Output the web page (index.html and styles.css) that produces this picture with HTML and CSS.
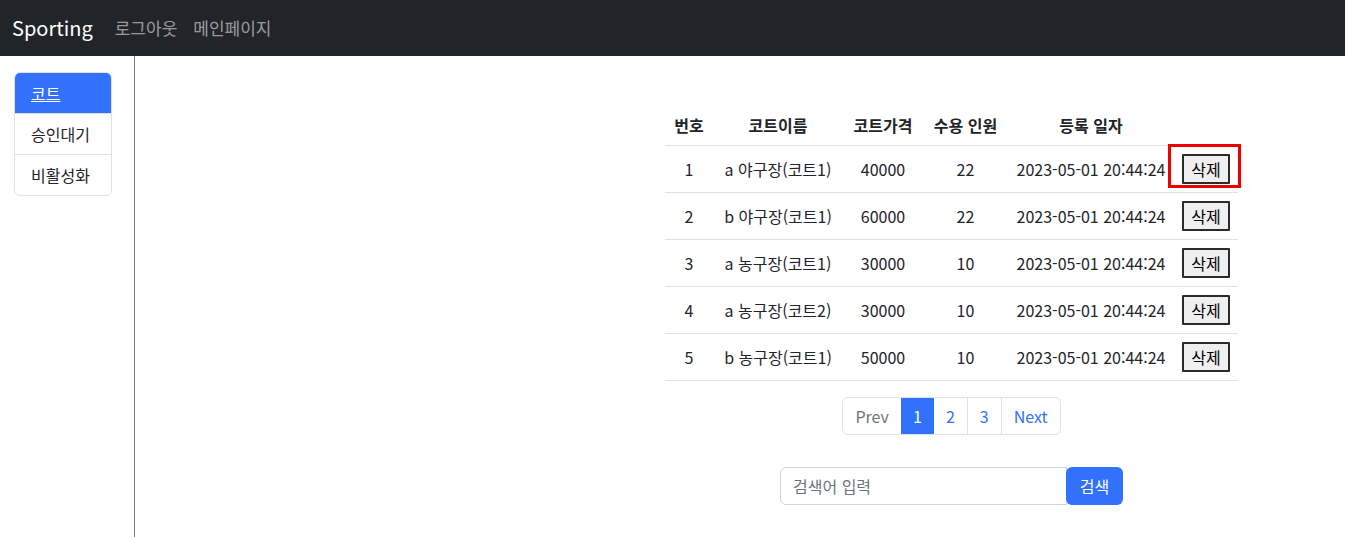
FILE: index.html
```html
<!DOCTYPE html>
<html lang="ko">
<head>
<meta charset="utf-8">
<title>Sporting</title>
<link rel="stylesheet" href="styles.css">
</head>
<body>
<nav class="navbar">
  <a class="brand" href="#">Sporting</a>
  <a class="nav-link" href="#">로그아웃</a>
  <a class="nav-link" href="#">메인페이지</a>
</nav>
<div class="layout">
  <aside class="sidebar">
    <div class="list-group">
      <a class="list-item active" href="#">코트</a>
      <a class="list-item" href="#">승인대기</a>
      <a class="list-item" href="#">비활성화</a>
    </div>
  </aside>
  <main class="main">
    <div class="content">
      <table class="table">
        <colgroup>
          <col class="c1"><col class="c2"><col class="c3"><col class="c4"><col class="c5"><col class="c6">
        </colgroup>
        <thead>
          <tr><th>번호</th><th>코트이름</th><th>코트가격</th><th>수용 인원</th><th>등록 일자</th><th></th></tr>
        </thead>
        <tbody>
          <tr><td>1</td><td>a 야구장(코트1)</td><td>40000</td><td>22</td><td>2023-05-01 20:44:24</td><td class="act"><button class="del">삭제</button><span class="highlight"></span></td></tr>
          <tr><td>2</td><td>b 야구장(코트1)</td><td>60000</td><td>22</td><td>2023-05-01 20:44:24</td><td class="act"><button class="del">삭제</button></td></tr>
          <tr><td>3</td><td>a 농구장(코트1)</td><td>30000</td><td>10</td><td>2023-05-01 20:44:24</td><td class="act"><button class="del">삭제</button></td></tr>
          <tr><td>4</td><td>a 농구장(코트2)</td><td>30000</td><td>10</td><td>2023-05-01 20:44:24</td><td class="act"><button class="del">삭제</button></td></tr>
          <tr><td>5</td><td>b 농구장(코트1)</td><td>50000</td><td>10</td><td>2023-05-01 20:44:24</td><td class="act"><button class="del">삭제</button></td></tr>
        </tbody>
      </table>
      <div class="pagination">
        <a class="page prev" href="#">Prev</a>
        <a class="page current" href="#">1</a>
        <a class="page" href="#">2</a>
        <a class="page" href="#">3</a>
        <a class="page next" href="#">Next</a>
      </div>
      <form class="search">
        <input class="search-input" type="text" placeholder="검색어 입력">
        <button class="search-btn" type="button">검색</button>
      </form>
    </div>
  </main>
</div>
</body>
</html>
```

FILE: styles.css
```css
* { box-sizing: border-box; }
html, body { margin: 0; padding: 0; height: 100%; }
body {
  font-family: "Noto Sans CJK KR", "Noto Sans", sans-serif;
  font-size: 16px;
  line-height: 24px;
  color: #212529;
  background: #fff;
  overflow: hidden;
}
a { text-decoration: none; }

.navbar {
  height: 56px;
  background: #212529;
  display: flex;
  align-items: center;
  padding: 0 12px;
}
.brand {
  color: #fff;
  font-size: 20px;
  line-height: 30px;
  margin-right: 14px;
}
.nav-link {
  color: rgba(255,255,255,0.55);
  padding: 8px;
  font-size: 17px;
}

.layout {
  display: flex;
  height: calc(100% - 56px);
}
.sidebar {
  width: 135px;
  border-right: 1px solid #7a7a7a;
  padding: 16px 0 0 14px;
  flex-shrink: 0;
}
.list-group {
  width: 98px;
  border: 1px solid #dee2e6;
  border-radius: 6px;
  overflow: hidden;
  display: flex;
  flex-direction: column;
}
.list-item {
  display: block;
  padding: 8px 16px;
  color: #212529;
  border-top: 1px solid #dee2e6;
}
.list-item:first-child { border-top: none; }
.list-item.active {
  background: #3171fb;
  color: #fff;
  text-decoration: underline;
}

.main {
  flex: 1;
  padding: 49px 0 0 530px;
}
.content {
  width: 573px;
  display: flex;
  flex-direction: column;
  align-items: center;
}
.table {
  width: 573px;
  border-collapse: collapse;
  table-layout: fixed;
}
.c1 { width: 48px; }
.c2 { width: 130px; }
.c3 { width: 80px; }
.c4 { width: 85px; }
.c5 { width: 166px; }
.c6 { width: 64px; }
.table th, .table td {
  padding: 8px;
  text-align: center;
  white-space: nowrap;
  border-bottom: 1px solid #dee2e6;
  vertical-align: middle;
}
.table th { font-weight: 700; }
.table td { padding: 8px 0; }
.table td.act { position: relative; padding-left: 8px; text-align: left; }
.del {
  font-family: inherit;
  font-size: 16px;
  line-height: 24px;
  height: 30px;
  padding: 0 5px;
  background: #efefef;
  color: #000;
  border: 2px solid #2b2b2b;
  border-radius: 1px;
  display: block;
  width: 48px;
}
.highlight {
  position: absolute;
  left: -6px;
  top: -2px;
  width: 73px;
  height: 44px;
  border: 3px solid #ee0000;
  pointer-events: none;
}

.pagination {
  display: flex;
  margin-top: 16px;
  border: 1px solid #dee2e6;
  border-radius: 6px;
  overflow: hidden;
  height: 38px;
}
.page {
  display: block;
  padding: 6px 12px;
  color: #3171fb;
  border-left: 1px solid #dee2e6;
  line-height: 24px;
  min-width: 33px;
  text-align: center;
}
.page.prev { border-left: none; color: #6c757d; }
.page.current { background: #3171fb; color: #fff; border-left: none; }
.page.current + .page { border-left: none; }

.search {
  display: flex;
  margin-top: 32px;
  height: 38px;
}
.search-input {
  width: 287px;
  height: 38px;
  border: 1px solid #ced4da;
  border-radius: 6px 0 0 6px;
  padding: 6px 12px;
  font-family: inherit;
  font-size: 16px;
  color: #212529;
  outline: none;
}
.search-input::placeholder { color: #6c757d; }
.search-btn {
  height: 38px;
  width: 57px;
  background: #3171fb;
  color: #fff;
  border: none;
  border-radius: 6px;
  margin-left: -1px;
  font-family: inherit;
  font-size: 16px;
  padding: 6px 12px;
}
```
